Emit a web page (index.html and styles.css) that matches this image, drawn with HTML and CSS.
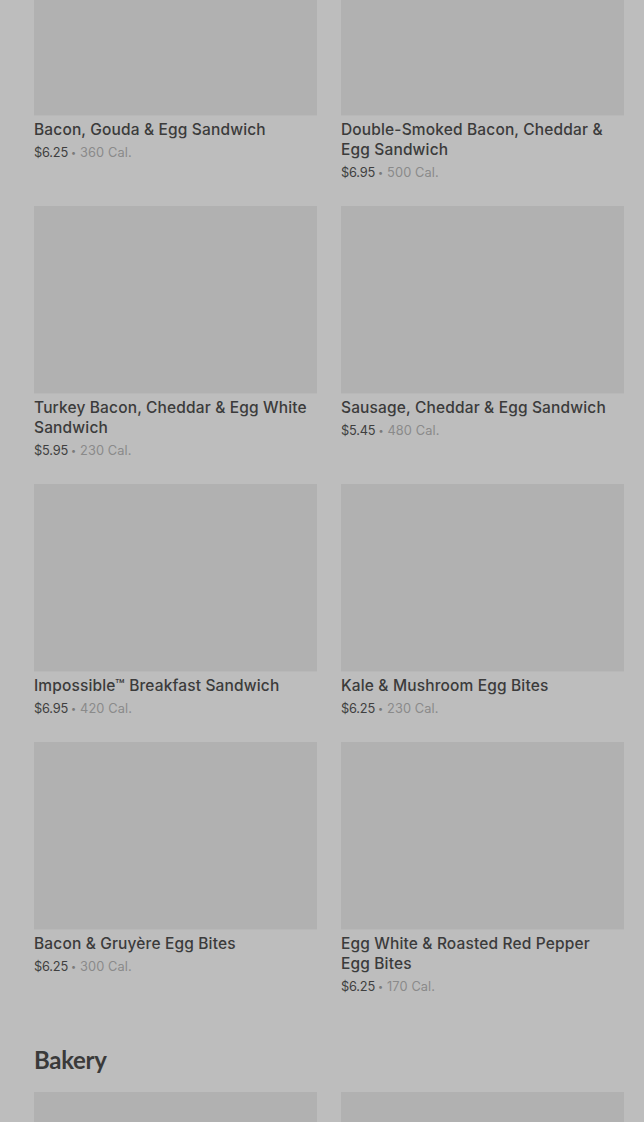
FILE: index.html
```html
<!DOCTYPE html>
<html lang="en">
<head>
<meta charset="utf-8">
<title>Menu</title>
<link rel="stylesheet" href="styles.css">
</head>
<body>
<main class="page">
  <section class="grid grid-first">
    <article class="card"><div class="thumb"></div><h3 class="name">Bacon, Gouda &amp; Egg Sandwich</h3><p class="meta"><span class="price">$6.25</span><span class="dot">•</span><span class="cal">360 Cal.</span></p></article>
    <article class="card"><div class="thumb"></div><h3 class="name">Double-Smoked Bacon, Cheddar &amp; Egg Sandwich</h3><p class="meta"><span class="price">$6.95</span><span class="dot">•</span><span class="cal">500 Cal.</span></p></article>
    <article class="card"><div class="thumb"></div><h3 class="name">Turkey Bacon, Cheddar &amp; Egg White Sandwich</h3><p class="meta"><span class="price">$5.95</span><span class="dot">•</span><span class="cal">230 Cal.</span></p></article>
    <article class="card"><div class="thumb"></div><h3 class="name">Sausage, Cheddar &amp; Egg Sandwich</h3><p class="meta"><span class="price">$5.45</span><span class="dot">•</span><span class="cal">480 Cal.</span></p></article>
    <article class="card"><div class="thumb"></div><h3 class="name">Impossible™ Breakfast Sandwich</h3><p class="meta"><span class="price">$6.95</span><span class="dot">•</span><span class="cal">420 Cal.</span></p></article>
    <article class="card"><div class="thumb"></div><h3 class="name">Kale &amp; Mushroom Egg Bites</h3><p class="meta"><span class="price">$6.25</span><span class="dot">•</span><span class="cal">230 Cal.</span></p></article>
    <article class="card"><div class="thumb"></div><h3 class="name">Bacon &amp; Gruyère Egg Bites</h3><p class="meta"><span class="price">$6.25</span><span class="dot">•</span><span class="cal">300 Cal.</span></p></article>
    <article class="card"><div class="thumb"></div><h3 class="name">Egg White &amp; Roasted Red Pepper Egg Bites</h3><p class="meta"><span class="price">$6.25</span><span class="dot">•</span><span class="cal">170 Cal.</span></p></article>
  </section>
  <h2 class="section-title">Bakery</h2>
  <section class="grid">
    <article class="card"><div class="thumb"></div></article>
    <article class="card"><div class="thumb"></div></article>
  </section>
</main>
</body>
</html>
```
FILE: styles.css
```css
html, body {
  margin: 0;
  padding: 0;
  background: #bdbdbd;
  overflow: hidden;
}
body {
  font-family: Inter, "Noto Sans", sans-serif;
  color: #3b3b3b;
}
.page {
  padding: 0 20px 0 34px;
}
.grid {
  display: grid;
  grid-template-columns: 283px 283px;
  column-gap: 24px;
  row-gap: 23px;
}
.grid-first {
  margin-top: -72px;
}
.card {
  display: flex;
  flex-direction: column;
}
.thumb {
  height: 187px;
  background: #b1b1b1;
  box-shadow: 0 1px 0 #b8b8b8;
}
.name {
  margin: 5px 0 0;
  padding-right: 6px;
  font-size: 15.5px;
  line-height: 20px;
  font-weight: 500;
  letter-spacing: 0.15px;
  color: #3b3b3b;
}
.meta {
  margin: 3px 0 0;
  font-size: 12.8px;
  line-height: 20px;
  display: flex;
  align-items: center;
}
.price {
  color: #3f3f3f;
  letter-spacing: -0.2px;
}
.dot {
  color: #7a7a7a;
  font-size: 9px;
  margin: 0 4px 0 3px;
}
.cal {
  color: #8a8a8a;
  letter-spacing: 0.1px;
}
.section-title {
  margin: 48px 0 17px;
  font-family: Lato, "Noto Sans", sans-serif;
  font-weight: 700;
  font-size: 24px;
  line-height: 30px;
  letter-spacing: -0.3px;
  color: #3a3a3a;
}
```
